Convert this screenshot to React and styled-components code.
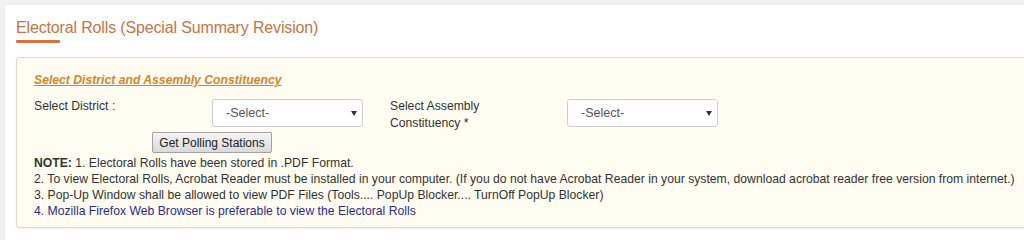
import React from 'react'
import styled, {createGlobalStyle} from 'styled-components'

const districts = ['-Select-']
const constituencies = ['-Select-']

export default function App() {
    return (
        <>
            <GlobalStyle />
            <Panel>
                <Title>Electoral Rolls (Special Summary Revision)</Title>
                <TitleBar />
                <SearchBox>
                    <BoxHeading>Select District and Assembly Constituency</BoxHeading>
                    <FormRow>
                        <FieldLabel>Select District :</FieldLabel>
                        <SelectWrap>
                            <Select defaultValue="-Select-">
                                {districts.map(d => <option key={d}>{d}</option>)}
                            </Select>
                        </SelectWrap>
                        <span />
                        <FieldLabel>Select Assembly<br />Constituency *</FieldLabel>
                        <SelectWrap>
                            <Select defaultValue="-Select-">
                                {constituencies.map(c => <option key={c}>{c}</option>)}
                            </Select>
                        </SelectWrap>
                    </FormRow>
                    <GetButton type="button">Get Polling Stations</GetButton>
                    <Notes>
                        <NoteLine><b>NOTE:</b> 1. Electoral Rolls have been stored in .PDF Format.</NoteLine>
                        <NoteLine>2. To view Electoral Rolls, Acrobat Reader must be installed in your computer. (If you do not have Acrobat Reader in your system, download acrobat reader free version from internet.)</NoteLine>
                        <NoteLine>3. Pop-Up Window shall be allowed to view PDF Files (Tools.... PopUp Blocker.... TurnOff PopUp Blocker)</NoteLine>
                        <NoteLine $highlight>4. Mozilla Firefox Web Browser is preferable to view the Electoral Rolls</NoteLine>
                    </Notes>
                </SearchBox>
            </Panel>
        </>
    )
}

const GlobalStyle = createGlobalStyle`
    html, body {
        margin: 0;
        background: #f1f1f1;
        overflow: hidden;
        font-family: "Liberation Sans", Arial, sans-serif;
    }
`

// PAGE PANEL
const Panel = styled.div`
    margin: 5px 0 0 5px;
    width: 1060px;
    height: 240px;
    background: #fff;
    padding: 13px 0 0 11px;
    box-sizing: border-box;
`

const Title = styled.h2`
    margin: 0;
    font-size: 16px;
    line-height: 20px;
    letter-spacing: -0.15px;
    font-weight: normal;
    color: #c8743f;
`

const TitleBar = styled.div`
    width: 44px;
    height: 3px;
    margin-top: 2px;
    background: #d8723a;
    border-radius: 1px;
`

// YELLOW SEARCH BOX
const SearchBox = styled.div`
    margin-top: 14px;
    background: #fffdf2;
    border: 1px solid #dcdad2;
    border-radius: 3px;
    box-shadow: 0 1px 2px rgba(0, 0, 0, 0.08);
    padding: 14px 0 8px 17px;
    color: #333;
    font-size: 12.2px;
`

const BoxHeading = styled.div`
    font-size: 12.2px;
    line-height: 16px;
    font-weight: bold;
    font-style: italic;
    text-decoration: underline;
    color: #d7862c;
`

const FormRow = styled.div`
    display: grid;
    grid-template-columns: 178px 151px 27px 177px 151px;
    align-items: start;
    margin-top: 10px;
`

const FieldLabel = styled.div`
    line-height: 16.5px;
    color: #333;
`

const SelectWrap = styled.div`
    position: relative;
    margin-top: 1px;

    &::after{
        content: '';
        position: absolute;
        right: 6px;
        top: 12px;
        border-left: 3px solid transparent;
        border-right: 3px solid transparent;
        border-top: 5px solid #333;
        pointer-events: none;
    }
`

const Select = styled.select`
    appearance: none;
    width: 100%;
    height: 28px;
    background: #fff;
    border: 1px solid #cfcfcf;
    border-radius: 3px;
    padding: 0 0 0 13px;
    font-family: "Liberation Sans", Arial, sans-serif;
    font-size: 12.5px;
    color: #555;
    outline: none;
`

const GetButton = styled.button`
    display: block;
    margin: 1px 0 0 118px;
    width: 120px;
    height: 21px;
    padding: 0;
    font-family: "Liberation Sans", Arial, sans-serif;
    font-size: 12px;
    color: #222;
    background: linear-gradient(#f4f4f4, #dadada);
    border: 1px solid #a3a3a3;
    border-radius: 2px;
`

// NOTES
const Notes = styled.div`
    margin-top: 2px;
`

const NoteLine = styled.div`
    line-height: 16px;
    white-space: nowrap;
    color: ${props => props.$highlight ? '#2c2c8f' : '#333'};
`
